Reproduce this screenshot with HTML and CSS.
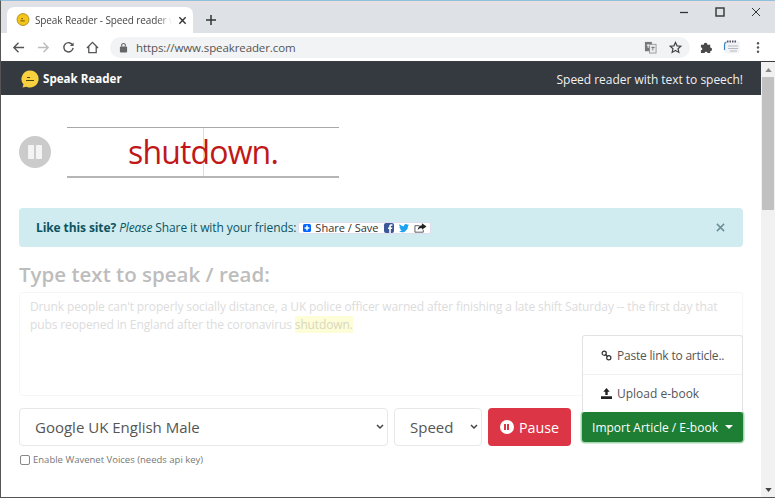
FILE: index.html
```html
<!DOCTYPE html>
<html lang="en">
<head>
<meta charset="utf-8">
<title>Speak Reader</title>
<link rel="stylesheet" href="styles.css">
</head>
<body>
<div class="window">
  <div class="tabstrip">
    <div class="tab">
      <svg class="favicon" viewBox="0 0 16 16"><circle cx="8" cy="7.500" r="6.800" fill="#f5c518" stroke="#a8861a" stroke-width="1"/><path d="M5 9h5M6 6.500h2" stroke="#5a4a10" stroke-width="1"/></svg>
      <span class="tab-title">Speak Reader - Speed reader w</span>
      <svg class="tab-close" viewBox="0 0 10 10"><path d="M1.500 1.500l7 7M8.500 1.500l-7 7" stroke="#333" stroke-width="1.500"/></svg>
    </div>
    <svg class="newtab" viewBox="0 0 12 12"><path d="M6 1v10M1 6h10" stroke="#333" stroke-width="1.500"/></svg>
    <div class="winctl">
      <svg viewBox="0 0 12 12"><path d="M2 6.500h8" stroke="#333" stroke-width="1.300"/></svg>
      <svg viewBox="0 0 12 12"><rect x="2" y="2" width="8" height="8" fill="none" stroke="#333" stroke-width="1.400"/></svg>
      <svg viewBox="0 0 12 12"><path d="M2 2l8 8M10 2l-8 8" stroke="#333" stroke-width="1"/></svg>
    </div>
  </div>
  <div class="toolbar">
    <svg class="tool tool-back" viewBox="0 0 14 14"><path d="M13 7H2M7 2L2 7l5 5" fill="none" stroke="#555" stroke-width="1.500"/></svg>
    <svg class="tool tool-fwd" viewBox="0 0 14 14"><path d="M1 7h11M7 2l5 5-5 5" fill="none" stroke="#bbb" stroke-width="1.500"/></svg>
    <svg class="tool tool-reload" viewBox="0 0 14 14"><path d="M11.500 4.500A5 5 0 1 0 12 7.500" fill="none" stroke="#555" stroke-width="1.500"/><path d="M12.500 1.500v4h-4z" fill="#555"/></svg>
    <svg class="tool tool-home" viewBox="0 0 14 14"><path d="M1 7.500L7 1.500l6 6M3 6v6.500h8V6" fill="none" stroke="#555" stroke-width="1.400"/></svg>
    <div class="omnibox">
      <svg class="lock" viewBox="0 0 10 12"><rect x="1" y="5" width="8" height="6.500" rx="1" fill="#666"/><path d="M3 5V3.500a2 2 0 0 1 4 0V5" fill="none" stroke="#666" stroke-width="1.200"/></svg>
      <span class="url">https://www.speakreader.com</span>
      <svg class="omni-translate" viewBox="0 0 14 14"><rect x="1" y="1" width="7.500" height="10" fill="#777"/><rect x="6" y="3.500" width="7" height="9.500" fill="#e8eaed" stroke="#888" stroke-width=".8"/><path d="M3 4.500h3M4.500 3.500v4" stroke="#fff"/><path d="M8 7h3.500M9.500 6v4" stroke="#777"/></svg>
      <svg class="omni-star" viewBox="0 0 14 14"><path d="M7 1.500l1.700 3.700 4 .4-3 2.700.9 4L7 10.300 3.400 12.300l.9-4-3-2.700 4-.4z" fill="none" stroke="#444" stroke-width="1.300"/></svg>
    </div>
    <svg class="ext-puzzle" viewBox="0 0 14 14"><path d="M1 4h3a2 2 0 0 1 4 0h3v3a2 2 0 0 1 0 4v2H8a1.500 1.500 0 0 0-3 0H1v-3a1.500 1.500 0 0 0 0-3z" fill="#4a4a4a"/></svg>
    <svg class="ext-cal" viewBox="0 0 18 16"><rect x="1" y="1.500" width="16" height="13" rx="4" fill="#f2f3f5"/><path d="M4 2.500h10" stroke="#556" stroke-width="2" stroke-dasharray="1.500 1"/><path d="M5 7h10M5 9.500h10M7 12h7" stroke="#b4b8c2" stroke-width="1"/><path d="M1.500 11V6a3 3 0 0 1 2-3" fill="none" stroke="#3b82c4" stroke-width="1.200"/></svg>
    <svg class="ext-menu" viewBox="0 0 4 14"><circle cx="2" cy="2.500" r="1.300" fill="#555"/><circle cx="2" cy="7" r="1.300" fill="#555"/><circle cx="2" cy="11.500" r="1.300" fill="#555"/></svg>
  </div>
  <div class="viewport">
    <div class="page">
      <nav class="navbar">
        <div class="brand">
          <svg class="brand-logo" viewBox="0 0 18 18"><path d="M9 .5a8.500 8.500 0 1 1-3.500 16.200L1.500 17.500l1-3A8.500 8.500 0 0 1 9 .5z" fill="#f7d23e"/><path d="M5 10.500h8M6 7.500h3" stroke="#4a4210" stroke-width="1"/></svg>
          <span>Speak Reader</span>
        </div>
        <span class="tagline">Speed reader with text to speech!</span>
      </nav>
      <main class="content">
        <section class="reader">
          <div class="round-pause"><i></i><i></i></div>
          <div class="word-box"><span class="word">shutdown.</span></div>
        </section>
        <div class="alert">
          <span class="alert-text"><b>Like this site?</b> <em>Please</em> Share it with your friends:</span>
          <span class="share">
            <svg class="share-plus" viewBox="0 0 10 10"><rect width="10" height="10" rx="2" fill="#0166ff"/><path d="M5 2v6M2 5h6" stroke="#fff" stroke-width="1.800"/></svg>
            <span class="share-label">Share / Save</span>
            <svg class="share-ico" viewBox="0 0 10 10"><rect width="10" height="10" rx="2" fill="#3b5998"/><path d="M6.800 10V6h1.300l.2-1.500H6.800v-1c0-.5.200-.8.800-.8h.8V1.300C8 1.200 7.600 1.200 7.100 1.200 6 1.200 5.200 1.900 5.200 3.200v1.300H4V6h1.200v4z" fill="#fff"/></svg>
            <svg class="share-ico" viewBox="0 0 12 10"><path d="M12 1.300c-.4.200-.9.300-1.400.4.500-.3.900-.8 1.100-1.300-.5.300-1 .5-1.600.6A2.500 2.500 0 0 0 5.900 3.200 7 7 0 0 1 .8.600 2.500 2.500 0 0 0 1.600 4c-.4 0-.8-.1-1.100-.3 0 1.200.9 2.200 2 2.400-.4.100-.8.100-1.100 0 .3 1 1.200 1.700 2.300 1.700A5 5 0 0 1 0 8.900 7 7 0 0 0 10.800 2.700c.5-.4.900-.9 1.200-1.400z" fill="#1da1f2"/></svg>
            <svg class="share-ico share-ico-wide" viewBox="0 0 14 10"><path d="M1 2.500h5M1 2.500v7h9V7" fill="none" stroke="#555" stroke-width="1"/><path d="M8.500 0l5 3.500-5 3.500V5C6.500 5 5 5.700 4 7.500 4 4.500 6 2.300 8.500 2z" fill="#222"/></svg>
          </span>
          <svg class="alert-close" viewBox="0 0 10 10"><path d="M1 1l8 8M9 1l-8 8" stroke="#6d9098" stroke-width="1.700"/></svg>
        </div>
        <h2 class="title">Type text to speak / read:</h2>
        <div class="textarea">Drunk people can't properly socially distance, a UK police officer warned after finishing a late shift Saturday -- the first day that pubs reopened in England after the coronavirus <mark>shutdown.</mark></div>
        <div class="controls">
          <div class="select select-voice"><span>Google UK English Male</span><svg class="chev" viewBox="0 0 8 6"><path d="M1 1l3 3 3-3" fill="none" stroke="#444" stroke-width="1.500"/></svg></div>
          <div class="select select-speed"><span>Speed</span><svg class="chev" viewBox="0 0 8 6"><path d="M1 1l3 3 3-3" fill="none" stroke="#444" stroke-width="1.500"/></svg></div>
          <button class="btn-pause" type="button"><span class="pause-ico"><i></i><i></i></span>Pause</button>
          <div class="import">
            <div class="menu">
              <div class="menu-item">
                <svg class="menu-ico" viewBox="0 0 12 12"><circle cx="3.500" cy="3.500" r="2.300" fill="none" stroke="#333" stroke-width="1.300"/><circle cx="8.500" cy="8.500" r="2.300" fill="none" stroke="#333" stroke-width="1.300"/><path d="M4.500 4.500l3 3" stroke="#333" stroke-width="1.300"/></svg><span class="menu-paste">Paste link to article..</span>
              </div>
              <div class="menu-item">
                <svg class="menu-ico" viewBox="0 0 12 12"><path d="M6 0l3.500 4H7.300v3.500H4.700V4H2.500z" fill="#222"/><path d="M0 9h12v3H0z" fill="#222"/></svg><span>Upload e-book</span>
              </div>
            </div>
            <button class="btn-import" type="button">Import Article / E-book<i class="caret"></i></button>
          </div>
        </div>
        <label class="wavenet"><span class="checkbox"></span>Enable Wavenet Voices (needs api key)</label>
      </main>
    </div>
    <div class="scrollbar">
      <svg class="sb-arrow" viewBox="0 0 8 5"><path d="M4 0l4 5H0z" fill="#888"/></svg>
      <div class="sb-thumb"></div>
      <svg class="sb-arrow sb-arrow-down" viewBox="0 0 8 5"><path d="M4 5L0 0h8z" fill="#444"/></svg>
    </div>
  </div>
</div>
</body>
</html>
```

FILE: styles.css
```css
* { box-sizing: border-box; }
html, body { margin: 0; padding: 0; }
body {
  width: 775px;
  height: 498px;
  overflow: hidden;
  background: #fff;
  font-family: "Open Sans", "Noto Sans", sans-serif;
}
.window {
  width: 775px;
  height: 498px;
  display: flex;
  flex-direction: column;
  border-top: 1px solid #8fc0e0;
  border-left: 1px solid #555;
  border-bottom: 1px solid #555;
  overflow: hidden;
}
.tabstrip {
  height: 32px;
  flex: none;
  background: #dee1e6;
  display: flex;
  align-items: flex-end;
  padding-left: 6px;
  border-top: 3px solid #e6e0e2;
}
.tab {
  width: 186px;
  height: 26px;
  background: #fff;
  border-radius: 7px 7px 0 0;
  display: flex;
  align-items: center;
  padding: 0 7px 0 9px;
}
.favicon { width: 14px; height: 14px; flex: none; }
.tab-title {
  margin-left: 5px;
  width: 137px;
  font-size: 10px;
  letter-spacing: -.12px;
  color: #444;
  white-space: nowrap;
  flex: none;
  -webkit-mask-image: linear-gradient(90deg, #000 122px, transparent 137px);
  mask-image: linear-gradient(90deg, #000 122px, transparent 137px);
}
.tab-close { width: 9px; height: 9px; margin-left: 6px; flex: none; }
.newtab { width: 12px; height: 12px; margin: 0 0 7px 12px; flex: none; }
.winctl {
  margin-left: auto;
  align-self: flex-start;
  display: flex;
  gap: 24px;
  padding: 2px 13px 0 0;
}
.winctl svg { width: 12px; height: 12px; }
.toolbar {
  height: 29px;
  flex: none;
  background: #fff;
  display: flex;
  align-items: center;
  padding-left: 11px;
  border-bottom: 1px solid #3a3d42;
}
.tool { width: 13px; height: 13px; flex: none; }
.tool-fwd { margin-left: 12px; }
.tool-reload { margin-left: 12px; }
.tool-home { margin-left: 11px; }
.omnibox {
  width: 580px;
  height: 21px;
  margin-left: 11px;
  background: #f1f3f4;
  border-radius: 11px;
  display: flex;
  align-items: center;
  padding-left: 9px;
  flex: none;
}
.lock { width: 9px; height: 11px; flex: none; }
.url {
  margin-left: 8px;
  font-size: 11.500px;
  color: #555;
  letter-spacing: -.1px;
}
.omni-translate { width: 13px; height: 13px; margin-left: auto; }
.omni-star { width: 13px; height: 13px; margin: 0 8px 0 12px; }
.ext-puzzle { width: 13px; height: 13px; margin-left: 10px; flex: none; }
.ext-cal { width: 18px; height: 16px; margin-left: 10px; flex: none; }
.ext-menu { width: 4px; height: 13px; margin-left: 15px; flex: none; }
.viewport {
  flex: 1;
  min-height: 0;
  display: flex;
}
.page { width: 760px; flex: none; display: flex; flex-direction: column; }
.navbar {
  height: 33px;
  flex: none;
  background: #343a40;
  display: flex;
  align-items: center;
  justify-content: space-between;
  padding: 0 18px 0 20px;
}
.brand {
  display: flex;
  align-items: center;
  gap: 4px;
  font-weight: 700;
  font-size: 11.600px;
  color: #fff;
}
.brand-logo { width: 18px; height: 18px; }
.tagline { font-size: 12px; letter-spacing: -.03px; color: #f0f0f0; padding-top: 1px; }
.content {
  position: relative;
  padding: 32px 18px 0 18px;
  flex: 1;
}
.reader { display: flex; align-items: center; height: 50px; }
.round-pause {
  width: 32px;
  height: 32px;
  border-radius: 50%;
  background: #cbcbcb;
  display: flex;
  align-items: center;
  justify-content: center;
  gap: 2px;
  flex: none;
}
.round-pause i { width: 6px; height: 14px; background: #f4f4f4; border-radius: 1px; display: block; }
.word-box {
  width: 272px;
  height: 51px;
  margin-left: 16px;
  padding-top: 1px;
  border-top: 1px solid #a8a8a8;
  border-bottom: 2px solid #b5b5b5;
  display: flex;
  align-items: center;
  justify-content: center;
  background: linear-gradient(#ddd, #ddd) center / 1px 100% no-repeat;
}
.word { font-size: 32px; line-height: 44px; color: #c01818; letter-spacing: -.85px; }
.alert {
  margin-top: 31px;
  height: 39px;
  background: #d1ecf1;
  border-radius: 4px;
  display: flex;
  align-items: center;
  padding: 0 18px 0 17px;
  font-size: 12px;
  color: #0c5460;
}
.alert-text { white-space: nowrap; letter-spacing: -.1px; }
.share {
  margin-left: 2px;
  width: 133px;
  height: 12px;
  background: #fff;
  border: 1px solid #dde;
  border-radius: 2px;
  display: flex;
  align-items: center;
  padding-left: 4px;
  font-size: 11px;
  color: #333;
  flex: none;
}
.share-plus { width: 8px; height: 8px; flex: none; }
.share-label { margin: 0 5px 0 4px; white-space: nowrap; }
.share-ico { width: 10px; height: 10px; margin-right: 5px; flex: none; }
.share-ico-wide { width: 13px; }
.alert-close { width: 9px; height: 9px; margin-left: auto; }
.title {
  margin: 12px 0 0;
  font-size: 20.500px;
  line-height: 30px;
  font-weight: 600;
  color: #bdbdbd;
  white-space: nowrap;
}
.textarea {
  margin-top: 3px;
  height: 104px;
  border: 1px solid #f6f6f6;
  border-radius: 3px;
  padding: 5px 10px;
  font-size: 12px;
  letter-spacing: -.12px;
  line-height: 18px;
  color: #dcdcdc;
}
.textarea mark { background: #fdfdd8; color: #d8d8c0; }
.controls {
  margin-top: 12px;
  height: 38px;
  display: flex;
  align-items: center;
}
.select {
  height: 38px;
  border: 1px solid #e6e8ea;
  border-radius: 4px;
  display: flex;
  align-items: center;
  justify-content: space-between;
  font-size: 15px;
  color: #555;
  flex: none;
  background: #fff;
}
.select-voice { width: 369px; padding: 0 3px 0 15px; }
.select-speed { width: 88px; margin-left: 6px; padding: 0 3px 0 15px; }
.chev { width: 8px; height: 6px; }
.btn-pause {
  margin-left: 6px;
  width: 83px;
  height: 38px;
  background: #dc3545;
  border: 0;
  border-radius: 4px;
  color: #fff;
  font: 14.300px "Open Sans", "Noto Sans", sans-serif;
  display: flex;
  align-items: center;
  justify-content: center;
  gap: 5px;
  padding: 0;
}
.pause-ico {
  width: 14px;
  height: 14px;
  border-radius: 50%;
  background: #fff;
  display: flex;
  align-items: center;
  justify-content: center;
  gap: 1px;
}
.pause-ico i { width: 2px; height: 6px; background: #dc3545; display: block; }
.import { position: relative; margin-left: 11px; width: 161px; height: 30px; }
.btn-import {
  width: 161px;
  height: 30px;
  background: #1e7e34;
  border: 0;
  border-radius: 3px;
  box-shadow: 0 0 0 1.500px #a5d8b0;
  color: #fff;
  font: 12px "Open Sans", "Noto Sans", sans-serif;
  display: flex;
  align-items: center;
  justify-content: center;
  padding: 0;
  white-space: nowrap;
}
.caret {
  margin-left: 7px;
  border: 4px solid transparent;
  border-top-color: #fff;
  border-bottom: 0;
}
.menu {
  position: absolute;
  left: 0;
  bottom: 30px;
  width: 161px;
  height: 77px;
  background: #fff;
  border: 1px solid #e2e2e2;
  border-bottom: 0;
  border-radius: 3px 3px 0 0;
}
.menu-item {
  height: 38px;
  display: flex;
  align-items: center;
  padding-left: 18px;
  font-size: 12px;
  color: #555;
  white-space: nowrap;
}
.menu-item + .menu-item { border-top: 1px solid #f0f0f0; }
.menu-ico { width: 11px; height: 11px; margin-right: 5px; flex: none; }
.menu-paste { letter-spacing: -.2px; }
.wavenet {
  margin-top: 7px;
  display: flex;
  align-items: center;
  font-size: 9.500px;
  color: #777;
  white-space: nowrap;
}
.checkbox {
  width: 10px;
  height: 10px;
  margin: 0 3px 0 1px;
  border: 1px solid #888;
  border-radius: 2px;
  background: #fff;
}
.scrollbar {
  width: 14px;
  flex: none;
  background: #f1f1f1;
  display: flex;
  flex-direction: column;
  align-items: center;
  padding-top: 6px;
}
.sb-arrow { width: 7px; height: 4px; flex: none; }
.sb-arrow-down { margin: auto 0 5px; }
.sb-thumb { width: 12px; height: 133px; background: #c1c1c1; margin-top: 5px; flex: none; }
```
